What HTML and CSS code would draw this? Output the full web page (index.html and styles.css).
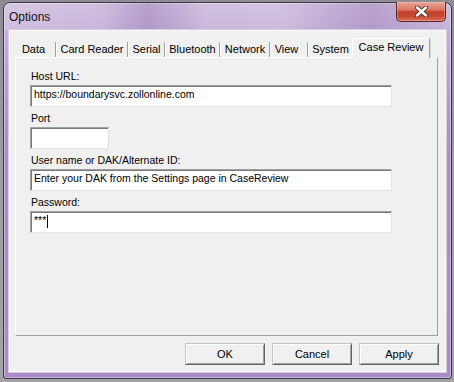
FILE: index.html
```html
<!DOCTYPE html>
<html>
<head>
<meta charset="utf-8">
<title>Options</title>
<link rel="stylesheet" href="styles.css">
</head>
<body>
<div class="window">
  <div class="titlebar">
    <span class="title">Options</span>
    <div class="close">
      <svg width="13" height="11" viewBox="0 0 13 11">
        <path d="M2 1.5 L11 9.5 M11 1.5 L2 9.5" stroke="#4a2a26" stroke-width="4.2" stroke-linecap="round" fill="none"/>
        <path d="M2 1.5 L11 9.5 M11 1.5 L2 9.5" stroke="#ffffff" stroke-width="2.4" stroke-linecap="round" fill="none"/>
      </svg>
    </div>
  </div>
  <div class="client">
    <div class="tabs">
      <div class="tab t-data">Data</div><span class="sep"></span>
      <div class="tab t-card">Card Reader</div><span class="sep"></span>
      <div class="tab t-serial">Serial</div><span class="sep"></span>
      <div class="tab t-bt">Bluetooth</div><span class="sep"></span>
      <div class="tab t-net">Network</div><span class="sep"></span>
      <div class="tab t-view">View</div><span class="sep"></span>
      <div class="tab t-sys">System</div>
      <div class="tab selected t-case">Case Review</div>
    </div>
    <div class="panel">
      <div class="group">
        <div class="label">Host URL:</div>
        <div class="field wide">https://boundarysvc.zollonline.com</div>
      </div>
      <div class="group">
        <div class="label">Port</div>
        <div class="field short"></div>
      </div>
      <div class="group">
        <div class="label">User name or DAK/Alternate ID:</div>
        <div class="field wide">Enter your DAK from the Settings page in CaseReview</div>
      </div>
      <div class="group">
        <div class="label">Password:</div>
        <div class="field wide">***<span class="caret"></span></div>
      </div>
    </div>
    <div class="buttons">
      <div class="btn">OK</div>
      <div class="btn">Cancel</div>
      <div class="btn">Apply</div>
    </div>
  </div>
</div>
</body>
</html>
```
FILE: styles.css
```css
html, body {
  margin: 0;
  padding: 0;
}
body {
  width: 454px;
  height: 382px;
  overflow: hidden;
  background: linear-gradient(to bottom, #8f8a96 0, #9e9aa4 40%, #a4a2a8 100%);
  font-family: "Liberation Sans", Arial, sans-serif;
  font-size: 11px;
  color: #000;
}
.window {
  margin: 2px 0 0 3px;
  width: 449px;
  height: 377px;
  box-sizing: border-box;
  border: 1px solid #3c3a46;
  border-radius: 7px 7px 3px 3px;
  padding: 0 5px 6px 5px;
  display: flex;
  flex-direction: column;
  background: linear-gradient(to bottom, #cdbcdd 0, #c5b0d9 28px, #bba2d2 70px, #aa8dc9 150px, #a98bc8 100%);
  box-shadow: inset 0 0 0 1px rgba(255,255,255,0.35);
}
.titlebar {
  height: 27px;
  flex: none;
  display: flex;
  align-items: flex-start;
  margin: 0 -5px;
  padding: 0 5px;
  background: linear-gradient(90deg, rgba(255,255,255,0.18) 0, rgba(255,255,255,0.05) 22%, rgba(80,40,120,0.18) 32%, rgba(255,255,255,0.08) 45%, rgba(255,255,255,0.12) 62%, rgba(90,50,130,0.18) 82%, rgba(255,255,255,0.05) 100%);
  border-radius: 6px 6px 0 0;
}
.title {
  font-size: 12px;
  line-height: 14px;
  padding-top: 7px;
  color: #111;
}
.close {
  margin-left: auto;
  margin-top: -1px;
  width: 50px;
  height: 20px;
  box-sizing: border-box;
  border: 1px solid #5a2420;
  border-top: none;
  border-radius: 0 0 5px 5px;
  background: linear-gradient(to bottom, #e8a596 0, #dc7866 40%, #c3402c 52%, #c84832 75%, #d9705a 100%);
  box-shadow: inset 0 0 0 1px rgba(255,220,210,0.35);
  display: flex;
  align-items: center;
  justify-content: center;
}
.close svg {
  display: block;
}
.client {
  flex: 1;
  background: #f0f0f0;
  border: 1px solid #fbfbfb;
  box-shadow: 0 0 0 1px #d6cae2;
  padding-top: 7px;
  display: flex;
  flex-direction: column;
}
.tabs {
  height: 19px;
  padding-left: 2px;
  display: flex;
  align-items: flex-end;
  position: relative;
  z-index: 1;
}
.tab {
  height: 19px;
  box-sizing: border-box;
  padding-top: 5px;
  line-height: 13px;
  text-align: center;
  white-space: nowrap;
  flex: none;
}
.sep {
  width: 0;
  height: 15px;
  border-left: 1px solid #a0a0a0;
  border-right: 1px solid #ffffff;
  flex: none;
}
.t-data { width: 43px; }
.t-card { width: 70px; }
.t-serial { width: 35px; }
.t-bt { width: 53px; }
.t-net { width: 48px; }
.t-view { width: 36px; padding-right: 5px; }
.t-sys { width: 43px; }
.t-case { width: 78px; }
.tab.selected {
  height: 20px;
  margin-bottom: -1px;
  padding-top: 2px;
  background: #f0f0f0;
  border-top: 1px solid #ffffff;
  border-left: 1px solid #ffffff;
  border-right: 1px solid #a0a0a0;
  box-shadow: 1px 0 0 #d8d8d8;
}
.panel {
  margin-left: 5px;
  width: 423px;
  height: 279px;
  box-sizing: border-box;
  border-style: solid;
  border-width: 1px;
  border-color: #ffffff #a0a0a0 #a0a0a0 #ffffff;
  padding: 11px 0 0 14px;
  display: flex;
  flex-direction: column;
  font-size: 10.5px;
}
.group {
  display: flex;
  flex-direction: column;
  margin-bottom: 4px;
}
.label {
  height: 14px;
  line-height: 14px;
  margin-bottom: 2px;
  padding-left: 1px;
  white-space: nowrap;
}
.field {
  height: 22px;
  box-sizing: border-box;
  background: #ffffff;
  border-style: solid;
  border-width: 1px;
  border-color: #a0a0a0 #e3e3e3 #e3e3e3 #a0a0a0;
  box-shadow: inset 1px 1px 0 #7a7a7a;
  padding: 2px 3px 0 3px;
  line-height: 13px;
  white-space: nowrap;
  overflow: hidden;
  display: flex;
  align-items: flex-start;
}
.wide { width: 362px; }
.short { width: 79px; }
.caret {
  display: inline-block;
  width: 1px;
  height: 13px;
  background: #000;
  margin-left: 1px;
  margin-top: 1px;
}
.buttons {
  margin-top: 7px;
  padding-right: 6px;
  display: flex;
  justify-content: flex-end;
  gap: 7px;
}
.btn {
  width: 80px;
  height: 22px;
  box-sizing: border-box;
  border: 1px solid;
  border-color: #c4c4c4 #646464 #646464 #c4c4c4;
  box-shadow: inset 1px 1px 0 #ffffff, inset -1px -1px 0 #a0a0a0;
  background: #f0f0f0;
  text-align: center;
  line-height: 20px;
}
```
